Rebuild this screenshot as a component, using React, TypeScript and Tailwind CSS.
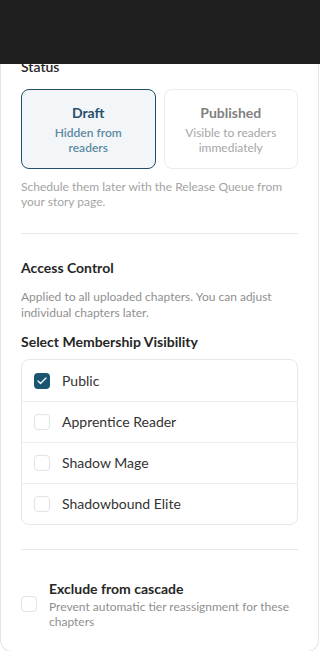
import { Check } from "lucide-react";

const tiers = [
  { label: "Public", checked: true },
  { label: "Apprentice Reader", checked: false },
  { label: "Shadow Mage", checked: false },
  { label: "Shadowbound Elite", checked: false },
];

function Box({ checked }: { checked: boolean }) {
  return checked ? (
    <span className="flex h-4 w-4 shrink-0 items-center justify-center rounded-[4px] bg-[#1b5570]">
      <Check size={12} strokeWidth={2.5} className="text-white" />
    </span>
  ) : (
    <span className="h-4 w-4 shrink-0 rounded-[4px] border border-[#e2e2e2] bg-white" />
  );
}

export default function App() {
  return (
    <div
      className="relative h-[651px] overflow-hidden bg-white text-[#262626]"
      style={{ fontFamily: 'Lato, "Noto Sans", sans-serif' }}
    >
      {/* fixed top bar over the scrolled sheet */}
      <div className="absolute inset-x-0 top-0 z-10 h-16 bg-[#1f1f1f]" />

      <div className="-mt-[20px] mr-[1px] rounded-b-xl border border-t-0 border-[#e5e5e5] px-5 pb-[22px] pt-[77px]">
        <div className="text-sm font-semibold leading-5">Status</div>

        <div className="mt-[12px] grid grid-cols-2 gap-2">
          <div className="flex h-[80px] flex-col items-center justify-center rounded-lg border border-[#1f4f6a] bg-[#f3f6f8] px-3 text-center">
            <div className="text-sm font-bold leading-5 text-[#264f6b]">Draft</div>
            <div className="mt-[2px] text-xs font-semibold leading-[15px] text-[#5b8aa2]">
              <div>Hidden from</div>
              <div>readers</div>
            </div>
          </div>
          <div className="flex h-[80px] flex-col items-center justify-center rounded-lg border border-[#ebebeb] bg-white px-3 text-center">
            <div className="text-sm font-bold leading-5 text-[#7f7f7f]">Published</div>
            <div className="mt-[2px] text-xs leading-[15px] text-[#a6a6a6]">
              <div>Visible to readers</div>
              <div>immediately</div>
            </div>
          </div>
        </div>

        <p className="mt-[10px] text-xs leading-[15px] text-[#a3a3a3]">
          Schedule them later with the Release Queue from your story page.
        </p>

        <div className="mt-[24px] h-px bg-[#e8e8e8]" />

        <div className="mt-[24px] text-sm font-bold leading-5">Access Control</div>
        <p className="mt-[11px] text-xs leading-[16px] text-[#8f8f8f]">
          Applied to all uploaded chapters. You can adjust individual chapters later.
        </p>

        <div className="mt-[11px] text-sm font-bold leading-5">Select Membership Visibility</div>

        <div className="mt-[7px] overflow-hidden rounded-lg border border-[#e8e8e8]">
          {tiers.map((t, i) => (
            <div
              key={t.label}
              className={`flex h-[41px] items-center gap-3 px-3 ${i > 0 ? "border-t border-[#ececec]" : ""}`}
            >
              <Box checked={t.checked} />
              <span className="text-sm leading-5 text-[#333]">{t.label}</span>
            </div>
          ))}
        </div>

        <div className="mt-[24px] h-px bg-[#e8e8e8]" />

        <div className="mt-[29px] flex items-center gap-3">
          <Box checked={false} />
          <div>
            <div className="text-sm font-bold leading-5 text-[#262626]">Exclude from cascade</div>
            <p className="text-xs leading-[15px] text-[#8f8f8f]">
              Prevent automatic tier reassignment for these chapters
            </p>
          </div>
        </div>
      </div>
    </div>
  );
}
